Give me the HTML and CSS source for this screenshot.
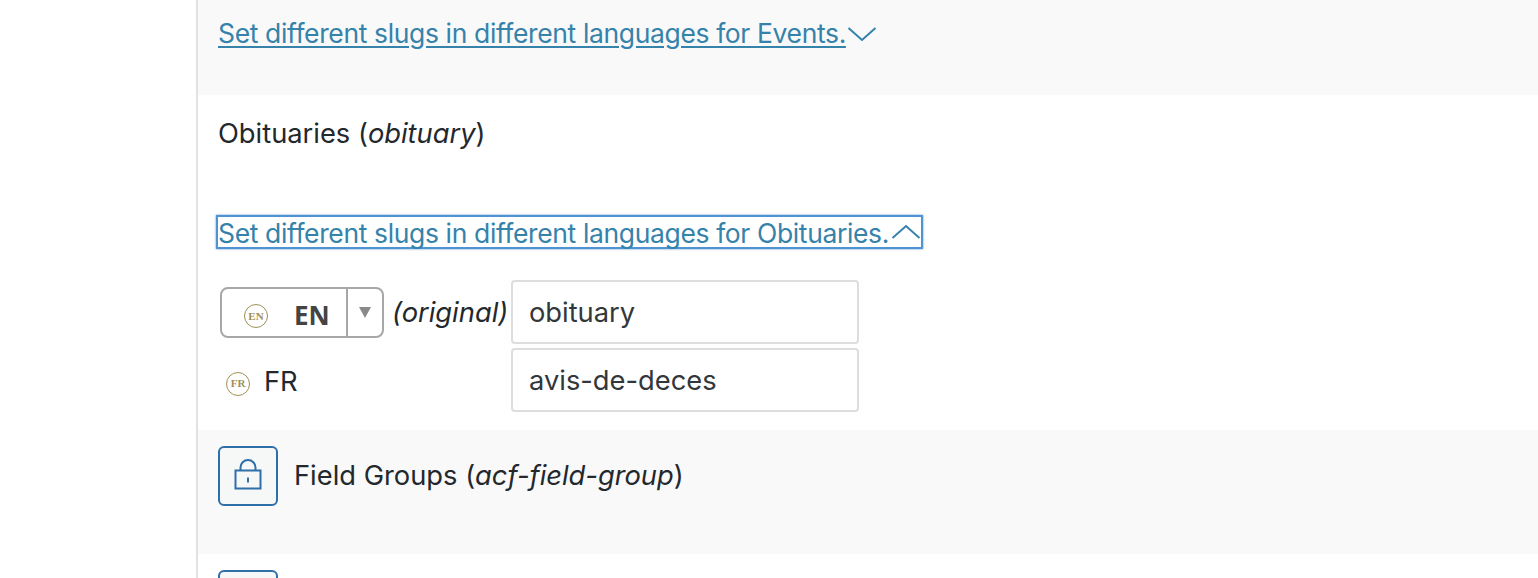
FILE: index.html
```html
<!DOCTYPE html>
<html lang="en">
<head>
<meta charset="utf-8">
<title>Slugs</title>
<link rel="stylesheet" href="styles.css">
</head>
<body>
<div class="page">
  <aside class="side"></aside>
  <main class="list">
    <section class="row alt events">
      <p class="toggle-line">
        <a class="toggle" href="#">Set different slugs in different languages for Events.</a>
        <svg class="chev" width="30" height="16" viewBox="0 0 30 16"><path d="M1.5 2 15 14 28.500 2" fill="none" stroke="#3582aa" stroke-width="2"/></svg>
      </p>
    </section>
    <section class="row obits">
      <p class="title">Obituaries (<em>obituary</em>)</p>
      <p class="toggle-line focus-line">
        <a class="toggle focused" href="#">Set different slugs in different languages for Obituaries.<svg class="chev up" width="30" height="16" viewBox="0 0 30 16"><path d="M1.500 14 15 2 28.500 14" fill="none" stroke="#3582aa" stroke-width="2"/></svg></a>
      </p>
      <div class="slugs">
        <div class="lang">
          <div class="switch">
            <span class="switch-main">
              <span class="flag">EN</span>
              <b class="code">EN</b>
            </span>
            <span class="switch-arrow"><i class="tri"></i></span>
          </div>
          <em class="orig">(original)</em>
        </div>
        <div class="slug-input">obituary</div>
        <div class="lang plain">
          <span class="flag">FR</span>
          <span class="code-plain">FR</span>
        </div>
        <div class="slug-input">avis-de-deces</div>
      </div>
    </section>
    <section class="row alt groups">
      <span class="lock">
        <svg class="lock-icon" width="28" height="32" viewBox="0 0 28 32"><path d="M1.500 12.500h25v18h-25zM6.500 12V9.500a7.500 7.500 0 0 1 15 0V12M14 19.500v5" fill="none" stroke="#2e6ea9" stroke-width="2"/></svg>
      </span>
      <p class="title">Field Groups (<em>acf-field-group</em>)</p>
    </section>
    <section class="row last">
      <span class="lock"></span>
    </section>
  </main>
</div>
</body>
</html>
```

FILE: styles.css
```css
* { box-sizing: border-box; }
html, body { margin: 0; height: 100%; overflow: hidden; background: #fff; }
body { font-family: Inter, "Noto Sans", sans-serif; font-size: 27.3px; color: #23282d; }
p { margin: 0; }
.page { display: flex; height: 578px; overflow: hidden; }
.side { width: 196px; flex: none; background: #fff; }
.list { flex: 1; border-left: 2px solid #e2e2e2; }
.row { padding-left: 20px; }
.alt { background: #f9f9f9; }
.events { height: 95px; padding-top: 16px; }
.toggle-line { display: flex; align-items: center; line-height: 34px; font-size: 26.5px; letter-spacing: -0.37px; }
.toggle { color: #3582aa; text-decoration: underline; text-underline-offset: 3px; }
.chev { flex: none; margin-left: 1px; }
.events .chev { margin-top: 1px; }
.obits { height: 335px; padding-top: 22px; }
.title { line-height: 34px; }
.focus-line { margin-top: 64px; margin-left: -2px; }
.focused { display: flex; align-items: center; padding: 1px 0 0 0; height: 34px; border: 2px solid #4f93d2; box-shadow: 0 0 2px rgba(30,110,190,.7); text-decoration: none; }
.up { margin-left: 2px; margin-right: 0; margin-top: -1px; }
.slugs { display: grid; grid-template-columns: 293px 348px; grid-auto-rows: 64px; row-gap: 4px; margin-top: 31px; }
.lang { display: flex; align-items: center; }
.switch { display: flex; width: 164px; height: 51px; margin-left: 2px; border: 2px solid #a7a7a7; border-radius: 8px; margin-top: 1px; }
.switch-main { display: flex; align-items: center; width: 126px; flex: none; padding-left: 22px; border-right: 2px solid #a7a7a7; }
.code { margin-left: 26px; color: #444; font-size: 26px; font-family: "Noto Sans", sans-serif; font-weight: 700; margin-top: 4px; }
.switch-arrow { flex: 1; display: flex; align-items: center; justify-content: center; }
.tri { width: 0; height: 0; border-left: 6px solid transparent; border-right: 6px solid transparent; border-top: 11px solid #8a8a8a; }
.flag { flex: none; width: 24px; height: 24px; margin-top: 7px; border: 1.5px solid #a08f57; border-radius: 50%; display: flex; align-items: center; justify-content: center; font: 700 11px/1 "Liberation Serif", serif; color: #a08f57; }
.orig { margin-left: 8px; }
.plain { padding-left: 8px; }
.code-plain { margin-left: 14px; margin-top: 2px; }
.slug-input { height: 64px; border: 2px solid #ddd; border-radius: 4px; padding-left: 16px; display: flex; align-items: center; color: #32373c; background: #fff; }
.groups { height: 124px; padding-top: 16px; display: flex; align-items: flex-start; }
.groups .title { margin-left: 16px; margin-top: 13px; }
.lock { width: 60px; height: 60px; flex: none; display: flex; align-items: center; justify-content: center; border: 2px solid #2e6ea9; border-radius: 6px; background: #f6f7f7; }
.lock-icon { margin-bottom: 4px; }
.last { padding-top: 16px; }
```
